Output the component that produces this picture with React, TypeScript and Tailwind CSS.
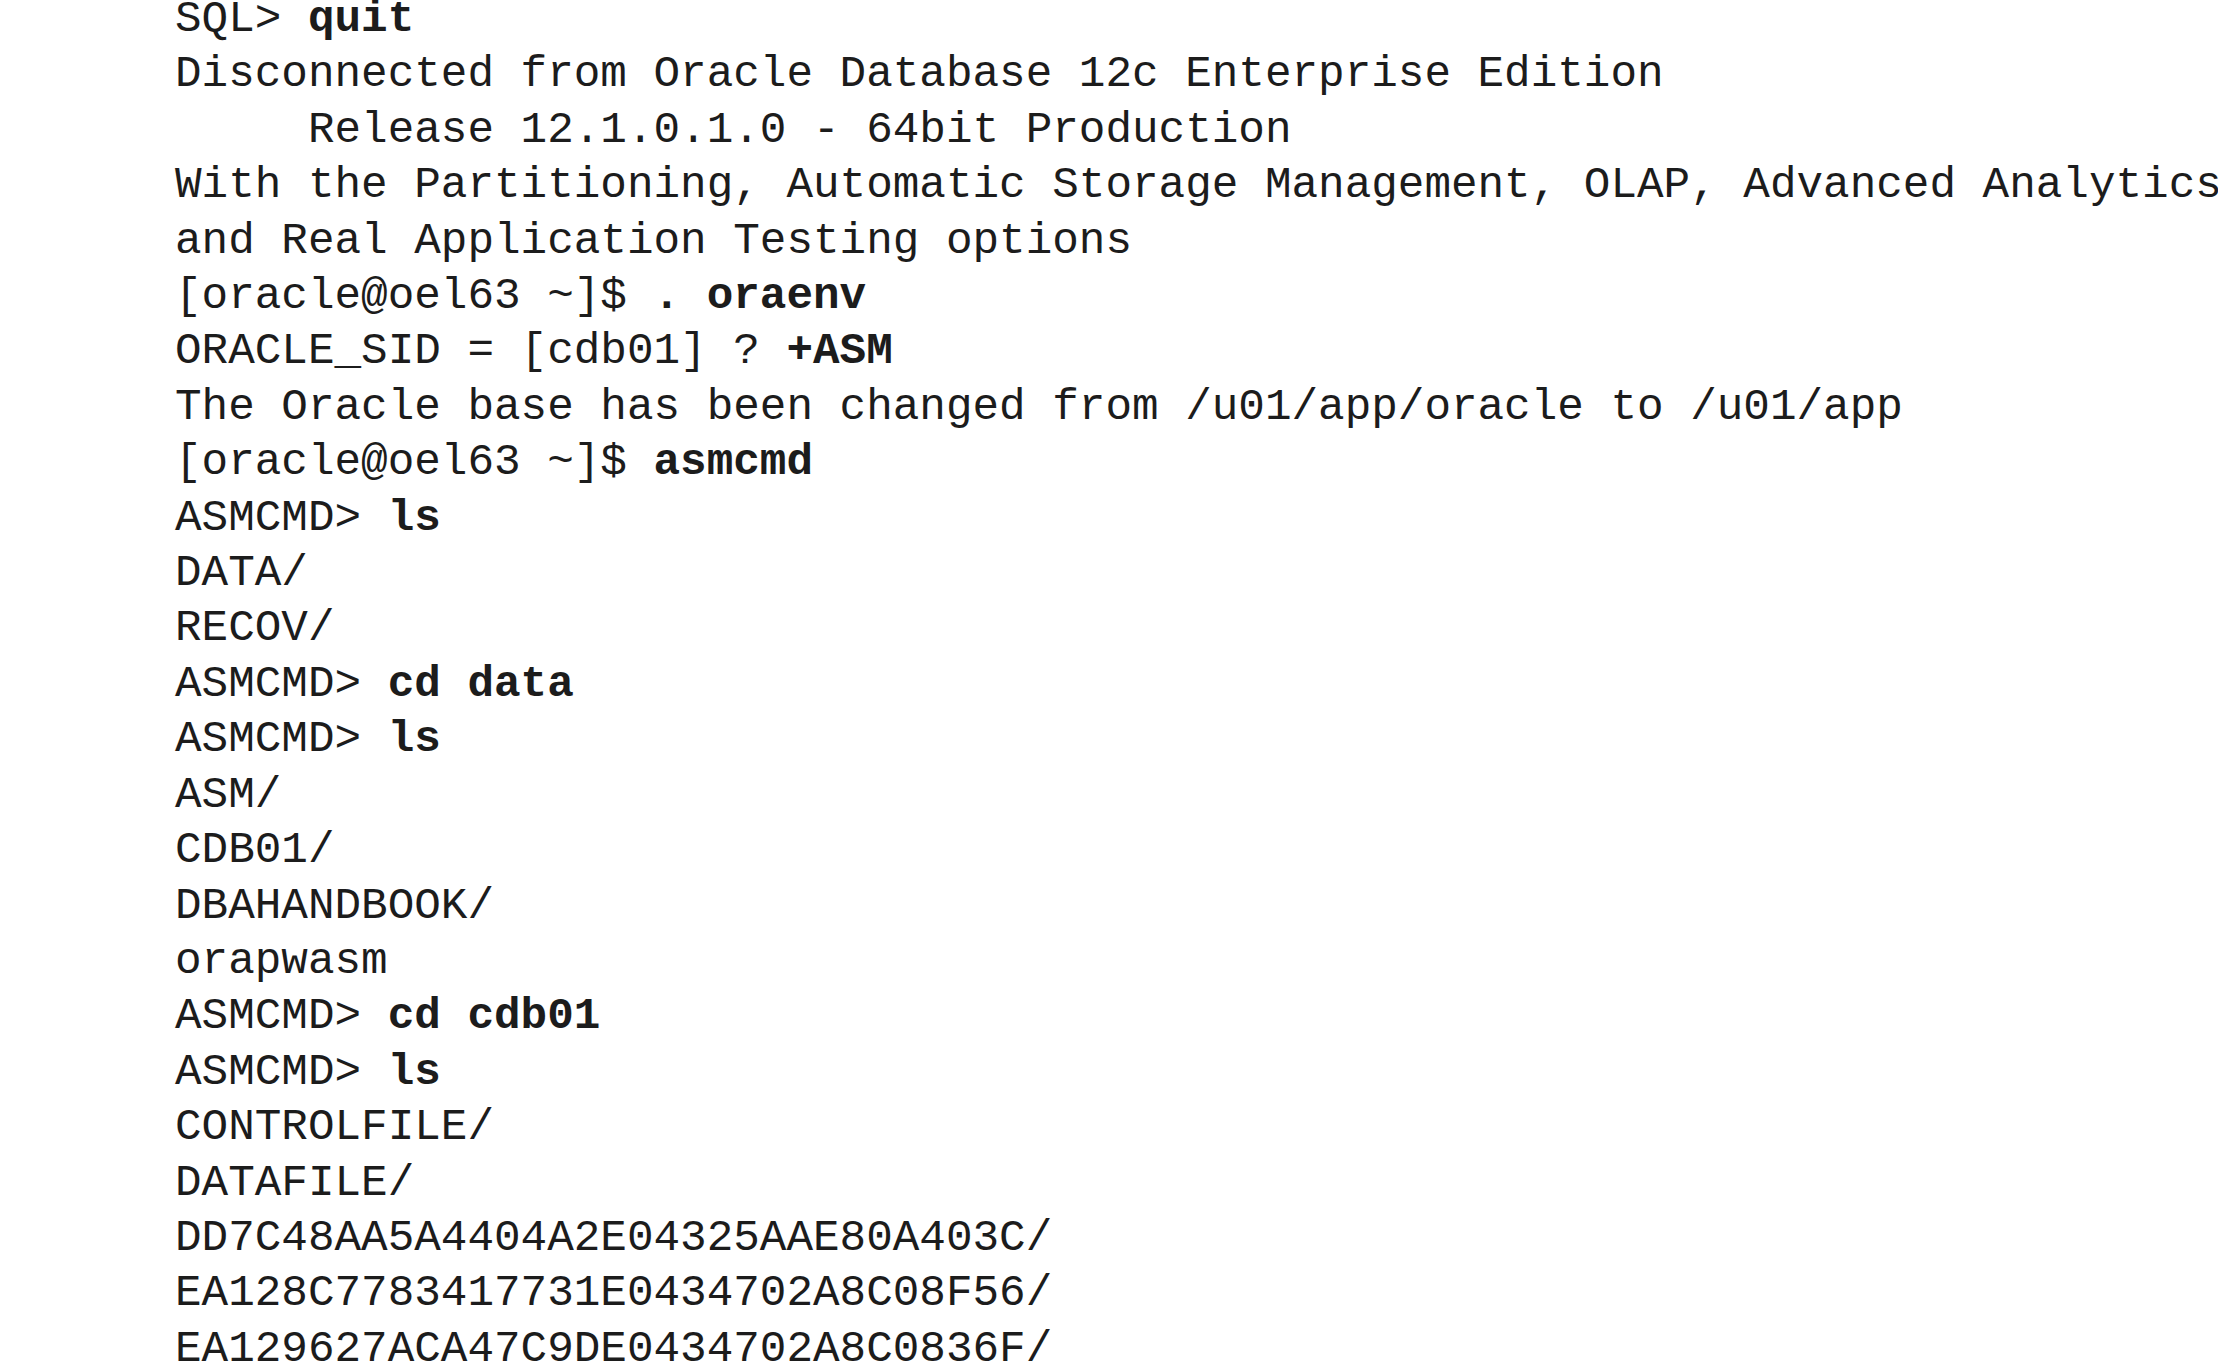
import React from 'react';

type Line = { text: string; bold?: string };

const lines: Line[] = [
  { text: 'SQL> ', bold: 'quit' },
  { text: 'Disconnected from Oracle Database 12c Enterprise Edition' },
  { text: '     Release 12.1.0.1.0 - 64bit Production' },
  { text: 'With the Partitioning, Automatic Storage Management, OLAP, Advanced Analytics' },
  { text: 'and Real Application Testing options' },
  { text: '[oracle@oel63 ~]$ ', bold: '. oraenv' },
  { text: 'ORACLE_SID = [cdb01] ? ', bold: '+ASM' },
  { text: 'The Oracle base has been changed from /u01/app/oracle to /u01/app' },
  { text: '[oracle@oel63 ~]$ ', bold: 'asmcmd' },
  { text: 'ASMCMD> ', bold: 'ls' },
  { text: 'DATA/' },
  { text: 'RECOV/' },
  { text: 'ASMCMD> ', bold: 'cd data' },
  { text: 'ASMCMD> ', bold: 'ls' },
  { text: 'ASM/' },
  { text: 'CDB01/' },
  { text: 'DBAHANDBOOK/' },
  { text: 'orapwasm' },
  { text: 'ASMCMD> ', bold: 'cd cdb01' },
  { text: 'ASMCMD> ', bold: 'ls' },
  { text: 'CONTROLFILE/' },
  { text: 'DATAFILE/' },
  { text: 'DD7C48AA5A4404A2E04325AAE80A403C/' },
  { text: 'EA128C7783417731E0434702A8C08F56/' },
  { text: 'EA129627ACA47C9DE0434702A8C0836F/' },
];

const App: React.FC = () => {
  return (
    <div className="w-[2218px] h-[1363px] overflow-hidden bg-white">
      <pre
        className="mt-[-8px] pl-[175px] text-[44.3px] leading-[55.4px] text-[#1c1c1c] whitespace-pre"
        style={{ fontFamily: '"Liberation Mono", "Courier New", monospace' }}
      >
        {lines.map((l, i) => (
          <div key={i}>
            {l.text}
            {l.bold && <span className="font-bold">{l.bold}</span>}
          </div>
        ))}
      </pre>
    </div>
  );
};

export default App;
